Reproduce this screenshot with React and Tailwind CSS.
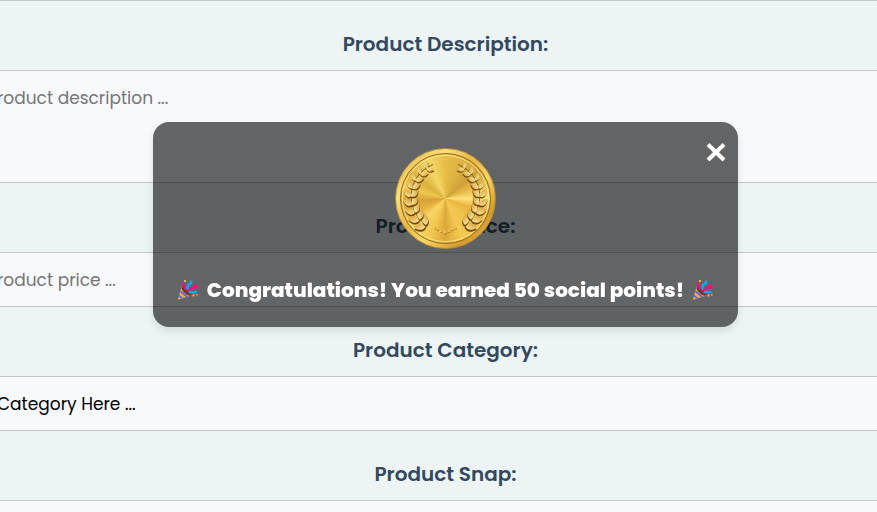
import { useState } from "react";

const LEAF = "M0 0C3 -10 13 -13 26 -4C18 6 8 7 0 0Z";
const LEAF_IN = "M0 0C3 10 13 13 26 4C18 -6 8 -7 0 0Z";

const sprigs = Array.from({ length: 9 }, (_, i) => {
  const angle = 124 + i * 14;
  const rad = (angle * Math.PI) / 180;
  const r = 105 - i * 0.4;
  return {
    x: 149 + r * Math.cos(rad),
    y: 144 + r * Math.sin(rad),
    angle,
    scale: 1.45 - i * 0.07,
  };
});

function Branch() {
  return (
    <g>
      <path
        d="M96 233C30 196 22 84 112 46"
        fill="none"
        stroke="#8a5a14"
        strokeWidth="3"
      />
      {sprigs.map((s) => (
        <g key={s.angle} transform={`translate(${s.x} ${s.y}) scale(${s.scale})`}>
          <path d={LEAF} transform={`translate(1 4) rotate(${s.angle + 52})`} fill="#74490c" />
          <path d={LEAF} transform={`rotate(${s.angle + 52})`} fill="url(#leaf)" />
          <path d={LEAF_IN} transform={`translate(1 4) rotate(${s.angle + 124})`} fill="#74490c" />
          <path d={LEAF_IN} transform={`rotate(${s.angle + 124})`} fill="url(#leaf)" />
        </g>
      ))}
    </g>
  );
}

function Medal() {
  return (
    <div className="grid h-[101px] w-[101px] place-items-center rounded-full border border-[#b58a3c] bg-[linear-gradient(135deg,#d9a53a,#fbe07a_25%,#e8b646_45%,#f8d768_60%,#d49a2c_80%,#f0c458)] p-[4px]">
      <div className="relative h-full w-full rounded-full border border-[#94691e] bg-[conic-gradient(from_0deg,#e6bd48,#dcb040_25deg,#cfa238_50deg,#e8bb48_70deg,#ffe27a_90deg,#e9b43e_110deg,#f0c450_135deg,#f4c850_158deg,#dca838_180deg,#f2c650_200deg,#f8d565_225deg,#e6b23c_245deg,#d6a236_265deg,#f0c650_285deg,#dcb03c_305deg,#f3d866_335deg,#e6bd48)]">
        <svg viewBox="14 14 272 272" className="absolute inset-0 h-full w-full" aria-hidden="true">
          <defs>
            <linearGradient id="leaf" x1="0" y1="0" x2="1" y2="1">
              <stop offset="0" stopColor="#fff0a8" />
              <stop offset="1" stopColor="#cf9830" />
            </linearGradient>
          </defs>
          <circle cx="150" cy="150" r="132" fill="none" stroke="#f9e38a" strokeWidth="3" />
          <Branch />
          <g transform="translate(300 0) scale(-1 1)">
            <Branch />
          </g>
          {[[118, 240, 3], [125, 245, 3], [136, 249, 4], [148, 252, 6], [160, 249, 4], [171, 245, 3], [180, 240, 3]].map(([x, y, r]) => (
            <g key={x}>
              <circle cx={x + 1} cy={y + 2} r={r} fill="#8c5c17" />
              <circle cx={x} cy={y} r={r} fill="#eebf4e" />
            </g>
          ))}
        </svg>
      </div>
    </div>
  );
}

function Popper() {
  return (
    <svg viewBox="0 0 22 22" className="h-[22px] w-[22px] shrink-0" role="img" aria-label="Party popper">
      <path d="M4.500 8L0.800 20.800L14.500 16.500Z" fill="#f7b13c" />
      <path d="M3.600 11.200L11.300 17.500L9 18.200L3 13.300ZM2.300 15.800L6.600 19L4.400 19.700L1.700 17.800Z" fill="#6366f1" />
      <ellipse cx="9.500" cy="12.200" rx="6.200" ry="2.600" transform="rotate(40 9.500 12.200)" fill="#6b3d28" />
      <path d="M8.500 11C9.500 8.500 5.200 7 6.500 3.500" fill="none" stroke="#f0127e" strokeWidth="2.600" />
      <path d="M10 10.500C11.500 9 9.500 6 12 5.500C13.500 5 14.500 3.500 14 1.500" fill="none" stroke="#0ea5e9" strokeWidth="2.600" />
      <path d="M11.500 12.500C13 8.500 14 11 16 8.800C17 7.500 18.500 8 21 8.500" fill="none" stroke="#f0127e" strokeWidth="2.600" />
      <path d="M12 14C14 11.500 16 15 20 12.500" fill="none" stroke="#0ea5e9" strokeWidth="2.600" />
      <path d="M7 1h2v2H7zM15.500 15.500h2v2h-2zM19 15h1.500v1.500H19z" fill="#f7b13c" />
      <path d="M17 4h2v2h-2z" fill="#f0127e" />
    </svg>
  );
}

const labelClass = "flex h-[69px] items-center justify-center pt-4 pl-[17px] text-xl font-semibold text-[#34495e]";
const fieldClass =
  "block w-full appearance-none rounded-none border-y border-[#c6c6c9] bg-[#f8f9fd] text-[17px] outline-none placeholder:text-[#757575]";

export default function App() {
  const [open, setOpen] = useState(true);

  return (
    <main className="min-h-screen overflow-hidden bg-[#ecf4f6] font-['Poppins','Inter',sans-serif]">
      <form className="-ml-[3px] border-t border-[#c6c6c9]">
        <label htmlFor="description" className={labelClass}>Product Description:</label>
        <textarea id="description" placeholder="roduct description ..." className={`${fieldClass} h-[113px] resize-none py-[15px] leading-6`} />
        <label htmlFor="price" className={labelClass}>Product Price:</label>
        <input id="price" type="text" placeholder="roduct price ..." className={`${fieldClass} h-[55px]`} />
        <label htmlFor="category" className={labelClass}>Product Category:</label>
        <select id="category" className={`${fieldClass} h-[55px] pt-0.5 text-black`}>
          <option>Category Here ...</option>
        </select>
        <label htmlFor="snap" className={labelClass}>Product Snap:</label>
        <input id="snap" type="text" className={`${fieldClass} h-[55px]`} />
      </form>

      {open && (
        <div className="pointer-events-none fixed inset-0 flex items-start justify-center pt-[122px] pl-3.5">
          <div
            role="dialog"
            aria-label="Points earned"
            className="pointer-events-auto relative flex flex-col items-center rounded-2xl bg-black/60 px-6 pt-[26px] pb-[21px] shadow-[0_4px_8px_rgba(0,0,0,0.1)]"
          >
            <button
              type="button"
              aria-label="Close"
              onClick={() => setOpen(false)}
              className="absolute top-5 right-3 text-white"
            >
              <svg viewBox="0 0 20 20" className="h-5 w-5" aria-hidden="true">
                <path d="M2 2.500L18 18M18 2.500L2 18" stroke="currentColor" strokeWidth="4" />
              </svg>
            </button>
            <Medal />
            <p className="mt-[25px] flex items-center gap-2 text-xl leading-8 font-extrabold whitespace-nowrap text-white">
              <Popper />
              <span>Congratulations! You earned 50 social points!</span>
              <Popper />
            </p>
          </div>
        </div>
      )}
    </main>
  );
}
